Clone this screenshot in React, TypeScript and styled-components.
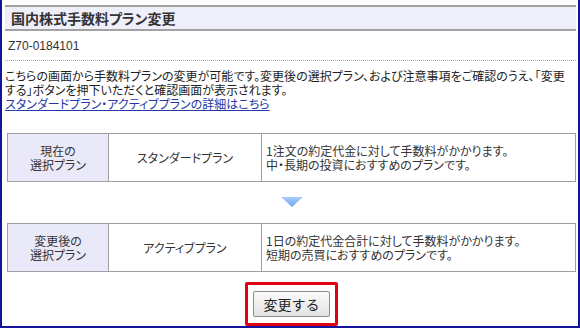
import React from 'react';
import styled, { createGlobalStyle } from 'styled-components';

const GlobalStyle = createGlobalStyle`
  html, body {
    margin: 0;
    padding: 0;
    background: #fff;
  }
  body {
    font-family: "Noto Sans CJK JP", "Liberation Sans", sans-serif;
    font-feature-settings: "palt";
    color: #333;
  }
`;

const Frame = styled.div`
  box-sizing: border-box;
  width: 580px;
  height: 328px;
  border: 2px solid #14149a;
  border-top: 0;
  padding: 5px 2px 0 3px;
  display: flex;
  flex-direction: column;
`;

const Header = styled.h1`
  margin: 0;
  height: 22px;
  padding-left: 6px;
  border-top: 2px solid #a2a2a2;
  border-bottom: 2px solid #a2a2a2;
  background: #efeffa;
  font-size: 14px;
  font-weight: bold;
  line-height: 22px;
  color: #333;
`;

const Code = styled.div`
  margin-top: 8px;
  padding: 0 0 7px 3px;
  border-bottom: 1px dotted #a8a8a8;
  font-family: "Liberation Sans", sans-serif;
  font-size: 12px;
  line-height: 14px;
  color: #333;
`;

const Intro = styled.p`
  margin: 8px 0 0;
  font-size: 12px;
  line-height: 14px;
  white-space: nowrap;
  color: #222;
`;

const DetailLink = styled.a`
  color: #2438a8;
  text-decoration: underline;
`;

const PlanTable = styled.table<{ $top: number }>`
  margin: ${(p) => p.$top}px 0 0 2px;
  width: 569px;
  border-collapse: collapse;
  font-size: 12px;
  line-height: 14px;
  color: #333;

  td {
    height: 47px;
    border: 1px solid #a0a0a0;
    padding: 0;
  }
`;

const LabelCell = styled.td`
  width: 100px;
  background: #e9e9fa;
  text-align: center;
`;

const NameCell = styled.td`
  width: 152px;
  text-align: center;
`;

const NoteCell = styled.td`
  padding-left: 4px !important;
  text-align: left;
`;

const ArrowRow = styled.div`
  display: flex;
  justify-content: center;
  margin: 15px 0 0 2px;
  height: 10px;
`;

const ButtonRow = styled.div`
  display: flex;
  justify-content: center;
  margin: 10px 0 0 2px;
`;

const Highlight = styled.div`
  padding: 6px 5px;
  border: 3px solid #e0000f;
  border-radius: 2px;
`;

const SubmitButton = styled.button`
  box-sizing: border-box;
  width: 77px;
  height: 26px;
  padding: 0;
  border: 1px solid #8c8c8c;
  border-radius: 2px;
  background: linear-gradient(#fbfbfb, #e3e3e3);
  font-family: "Noto Sans CJK JP", sans-serif;
  font-size: 14px;
  color: #222;
  cursor: pointer;
`;

type PlanRowProps = {
  label: React.ReactNode;
  name: string;
  note: React.ReactNode;
  top: number;
};

const PlanRow: React.FC<PlanRowProps> = ({ label, name, note, top }) => (
  <PlanTable $top={top}>
    <tbody>
      <tr>
        <LabelCell>{label}</LabelCell>
        <NameCell>{name}</NameCell>
        <NoteCell>{note}</NoteCell>
      </tr>
    </tbody>
  </PlanTable>
);

const DownArrow = () => (
  <svg width="22" height="10" viewBox="0 0 22 10">
    <defs>
      <linearGradient id="arrowFill" x1="0" y1="0" x2="0" y2="1">
        <stop offset="0" stopColor="#a9cdf7" />
        <stop offset="1" stopColor="#6fa8ec" />
      </linearGradient>
    </defs>
    <polygon points="0,0 22,0 11,10" fill="url(#arrowFill)" />
  </svg>
);

export default function App() {
  return (
    <>
      <GlobalStyle />
      <Frame>
        <Header>国内株式手数料プラン変更</Header>
        <Code>Z70-0184101</Code>
        <Intro>
          こちらの画面から手数料プランの変更が可能です。変更後の選択プラン、および注意事項をご確認のうえ、「変更
          <br />
          する」ボタンを押下いただくと確認画面が表示されます。
          <br />
          <DetailLink href="#">スタンダードプラン・アクティブプランの詳細はこちら</DetailLink>
        </Intro>
        <PlanRow
          top={22}
          label={<>現在の<br />選択プラン</>}
          name="スタンダードプラン"
          note={<>1注文の約定代金に対して手数料がかかります。<br />中・長期の投資におすすめのプランです。</>}
        />
        <ArrowRow>
          <DownArrow />
        </ArrowRow>
        <PlanRow
          top={16}
          label={<>変更後の<br />選択プラン</>}
          name="アクティブプラン"
          note={<>1日の約定代金合計に対して手数料がかかります。<br />短期の売買におすすめのプランです。</>}
        />
        <ButtonRow>
          <Highlight>
            <SubmitButton type="button">変更する</SubmitButton>
          </Highlight>
        </ButtonRow>
      </Frame>
    </>
  );
}
